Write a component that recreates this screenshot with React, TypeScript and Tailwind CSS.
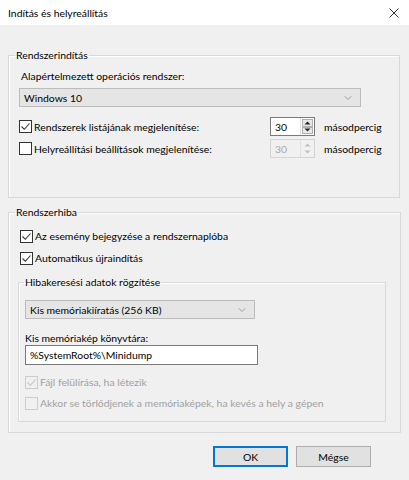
import { ChevronDown } from "lucide-react";

function Check({ checked, disabled }: { checked?: boolean; disabled?: boolean }) {
  return (
    <span
      className={`flex h-[13px] w-[13px] shrink-0 items-center justify-center border ${
        disabled ? "border-[#cccccc] bg-[#f0f0f0]" : "border-[#333333] bg-white"
      }`}
    >
      {checked && (
        <svg width="11" height="11" viewBox="0 0 11 11">
          <path
            d="M1.5 5.5 L4.3 8.3 L9.5 2.5"
            fill="none"
            stroke={disabled ? "#c4c4c4" : "#333333"}
            strokeWidth="1.1"
          />
        </svg>
      )}
    </span>
  );
}

function CheckRow({
  label,
  checked,
  disabled,
}: {
  label: string;
  checked?: boolean;
  disabled?: boolean;
}) {
  return (
    <div className="flex h-4 items-center gap-[2px] whitespace-nowrap">
      <Check checked={checked} disabled={disabled} />
      <span className={disabled ? "text-[#a0a0a0]" : "text-black"}>{label}</span>
    </div>
  );
}

function Select({ value, width }: { value: string; width: string }) {
  return (
    <div
      className={`flex h-[19px] items-center justify-between border border-[#bcbcbc] bg-[#e5e5e5] pl-[4px] pr-[6px] ${width}`}
    >
      <span>{value}</span>
      <ChevronDown className="h-[12px] w-[12px] text-[#707070]" strokeWidth={1.2} />
    </div>
  );
}

function Spin({ disabled }: { disabled?: boolean }) {
  const arrow = disabled ? "#c0c0c0" : "#222222";
  return (
    <div
      className={`flex h-[19px] w-[45px] items-stretch border ${
        disabled ? "border-[#d4d4d4] bg-[#f0f0f0] text-[#a8a8a8]" : "border-[#7a7a7a] bg-white text-black"
      }`}
    >
      <span className="flex flex-1 items-center pl-[4px]">30</span>
      <div className="flex w-[14px] flex-col border-l border-[#e0e0e0] p-[1px]">
        <div
          className={`flex flex-1 items-center justify-center ${
            disabled ? "bg-[#f0f0f0]" : "border border-[#b0b0b0] bg-[#e8e8e8]"
          }`}
        >
          <svg width="7" height="4" viewBox="0 0 7 4">
            <path d="M0.5 3.5 L3.5 0.5 L6.5 3.5 Z" fill={arrow} />
          </svg>
        </div>
        <div
          className={`flex flex-1 items-center justify-center ${
            disabled ? "bg-[#f0f0f0]" : "border border-[#b0b0b0] bg-[#e8e8e8]"
          }`}
        >
          <svg width="7" height="4" viewBox="0 0 7 4">
            <path d="M0.5 0.5 L3.5 3.5 L6.5 0.5 Z" fill={arrow} />
          </svg>
        </div>
      </div>
    </div>
  );
}

export default function App() {
  return (
    <div className="flex h-[480px] w-[409px] flex-col bg-[#f0f0f0] font-['Lato',sans-serif] text-[10.4px] leading-4 text-black">
      {/* Title bar */}
      <div className="flex h-[25px] items-center justify-between bg-white pl-2 pr-[10px]">
        <span>Indítás és helyreállítás</span>
        <svg width="10" height="10" viewBox="0 0 10 10">
          <path d="M0.5 0.5 L9.5 9.5 M9.5 0.5 L0.5 9.5" stroke="#333" strokeWidth="1" />
        </svg>
      </div>

      {/* Rendszerindítás */}
      <fieldset className="mx-2 mt-[22px] w-[392px] border border-[#d8d8d8] shadow-[inset_1px_1px_0_#ffffff] p-0">
        <legend className="ml-[6px] px-[1px]">Rendszerindítás</legend>
        <div className="flex flex-col pl-[10px] pt-[5px] pb-[39px]">
          <span className="pl-[2px]">Alapértelmezett operációs rendszer:</span>
          <div className="mt-[4px]">
            <Select value="Windows 10" width="w-[342px]" />
          </div>
          <div className="mt-[10px] flex h-[19px] items-center">
            <div className="w-[251px]">
              <CheckRow label="Rendszerek listájának megjelenítése:" checked />
            </div>
            <Spin />
            <span className="ml-[9px]">másodpercig</span>
          </div>
          <div className="mt-[3px] flex h-[19px] items-center">
            <div className="w-[251px]">
              <CheckRow label="Helyreállítási beállítások megjelenítése:" />
            </div>
            <Spin disabled />
            <span className="ml-[9px]">másodpercig</span>
          </div>
        </div>
      </fieldset>

      {/* Rendszerhiba */}
      <fieldset className="mx-2 mt-[6px] w-[392px] border border-[#d8d8d8] shadow-[inset_1px_1px_0_#ffffff] p-0">
        <legend className="ml-[6px] px-[1px]">Rendszerhiba</legend>
        <div className="flex flex-col pl-[11px] pt-[8px] pb-[10px] pr-[14px]">
          <CheckRow label="Az esemény bejegyzése a rendszernaplóba" checked />
          <div className="mt-[6px]">
            <CheckRow label="Automatikus újraindítás" checked />
          </div>

          <fieldset className="mt-[8px] w-[368px] -ml-[2px] border border-[#d8d8d8] shadow-[inset_1px_1px_0_#ffffff] p-0">
            <legend className="ml-[5px] px-[1px]">Hibakeresési adatok rögzítése</legend>
            <div className="flex flex-col pl-[6px] pt-[10px] pb-[10px]">
              <Select value="Kis memóriakiíratás (256 KB)" width="w-[230px]" />
              <span className="mt-[12px] leading-[14px]">Kis memóriakép könyvtára:</span>
              <div className="flex h-[20px] w-[233px] items-center border border-[#7a7a7a] bg-white pl-[4px]">
                %SystemRoot%\Minidump
              </div>
              <div className="mt-[9px]">
                <CheckRow label="Fájl felülírása, ha létezik" checked disabled />
              </div>
              <div className="mt-[5px]">
                <CheckRow label="Akkor se törlődjenek a memóriaképek, ha kevés a hely a gépen" disabled />
              </div>
            </div>
          </fieldset>
        </div>
      </fieldset>

      {/* Buttons */}
      <div className="mt-[13px] flex justify-end gap-2 pr-[38px]">
        <button className="h-[21px] w-[75px] border-2 border-[#0078d7] bg-[#e1e1e1]">OK</button>
        <button className="h-[21px] w-[75px] border border-[#adadad] bg-[#e1e1e1]">Mégse</button>
      </div>
    </div>
  );
}
